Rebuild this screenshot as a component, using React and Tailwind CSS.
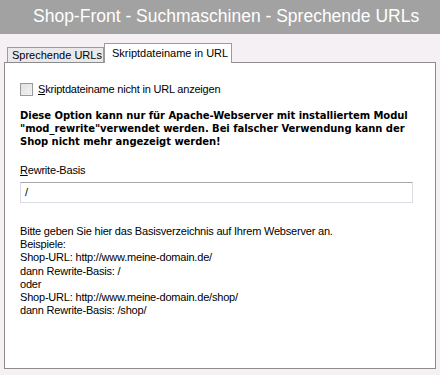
export default function App() {
  const font = { fontFamily: '"Liberation Sans", Arial, sans-serif' };
  return (
    <div className="w-[440px] h-[375px] bg-[#f4f0f4] overflow-hidden text-black" style={font}>
      <div className="h-[34px] bg-[#a2a2a2] flex items-center pl-[33px] pb-[1px] text-white text-[17.5px] leading-none whitespace-nowrap">
        Shop-Front - Suchmaschinen - Sprechende URLs
      </div>
      <div className="pt-[9px] pl-[4px]">
        <div className="flex items-end h-[19px] pl-[3px] relative z-10 whitespace-nowrap text-[11px]">
          <div className="h-[15px] w-[97px] border border-b-0 border-[#9c9c9c] bg-[#ebe8eb] leading-[14px] pl-[4px]">
            Sprechende URLs
          </div>
          <div className="h-[20px] w-[128px] -mb-[1px] border border-b-0 border-[#9c9c9c] bg-white leading-[16px] pl-[7px] pt-[1px]">
            Skriptdateiname in URL
          </div>
        </div>
        <div className="w-[432px] h-[307px] border border-[#8c8c8c] bg-white pl-[15px] pr-[20px] pt-[20px] text-[11px] tracking-[-0.2px]">
          <label className="flex items-center gap-[5px] h-[13px] leading-[13px]">
            <span className="w-[13px] h-[13px] border border-[#9a9a9a] bg-gradient-to-br from-[#dcdcdc] to-[#f8f8f8] flex items-center justify-center">
              <span className="w-[9px] h-[9px] border border-[#e8e8e8]"></span>
            </span>
            <span><span className="underline">S</span>kriptdateiname nicht in URL anzeigen</span>
          </label>
          <p className="mt-[13px] font-bold text-[10px] leading-[13px] tracking-[-0.05px]" style={{ fontFamily: '"DejaVu Sans", Verdana, sans-serif' }}>
            Diese Option kann nur für Apache-Webserver mit installiertem Modul "mod_rewrite"verwendet werden. Bei falscher Verwendung kann der Shop nicht mehr angezeigt werden!
          </p>
          <div className="mt-[15px] leading-[14px]">
            <span className="underline">R</span>ewrite-Basis
          </div>
          <div className="mt-[5px] w-[393px] h-[21px] border border-[#dcdce6] border-t-[#a8a8a8] pl-[4px] leading-[19px]">
            /
          </div>
          <div className="mt-[22px] leading-[13.2px]">
            <div>Bitte geben Sie hier das Basisverzeichnis auf Ihrem Webserver an.</div>
            <div>Beispiele:</div>
            <div>Shop-URL: http://www.meine-domain.de/</div>
            <div>dann Rewrite-Basis: /</div>
            <div>oder</div>
            <div>Shop-URL: http://www.meine-domain.de/shop/</div>
            <div>dann Rewrite-Basis: /shop/</div>
          </div>
        </div>
      </div>
    </div>
  );
}
